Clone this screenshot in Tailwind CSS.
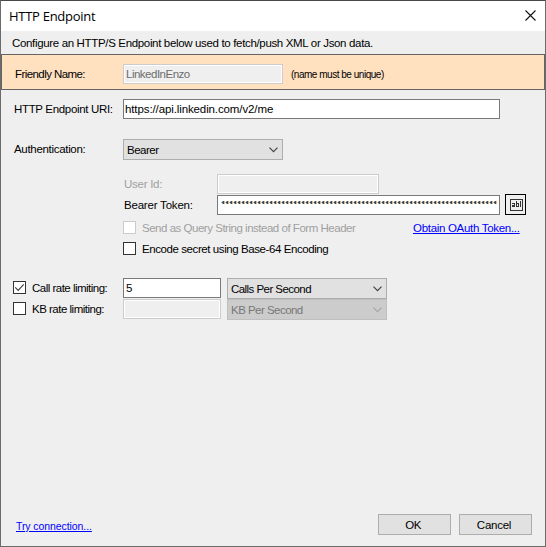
<!DOCTYPE html>
<html lang="en">

<head>
  <meta charset="UTF-8" />
  <meta name="viewport" content="width=device-width, initial-scale=1.0" />
  <title>HTTP Endpoint</title>

  <!-- Tailwind CSS -->
  <script src="https://cdn.jsdelivr.net/npm/@tailwindcss/browser@4"></script>
</head>

<body class="w-[546px] h-[547px] overflow-hidden font-['Liberation_Sans',Arial,sans-serif] text-[11.5px] leading-[14px] text-black whitespace-nowrap">

  <div class="w-[546px] h-[547px] flex flex-col border border-[#6b6b6b] border-t-[#4c484a] bg-[#efefef]">

    <!-- Title bar -->
    <header class="h-[30px] shrink-0 flex items-center justify-between bg-white pl-2 pr-[9px]">
      <h1 class="font-['Open_Sans','Noto_Sans',sans-serif] text-[13px] leading-[18px] tracking-[-0.28px]">HTTP Endpoint</h1>
      <svg class="w-[11px] h-[11px] mb-[2px]" viewBox="0 0 11 11" fill="none" stroke="#111" stroke-width="1.1">
        <path d="M.5 .5l10 10M10.500 .5l-10 10" />
      </svg>
    </header>

    <p class="h-[23px] shrink-0 pl-[11px] pt-[5px] tracking-[-0.34px]">Configure an HTTP/S Endpoint below used to fetch/push XML or Json data.</p>

    <!-- Friendly name -->
    <section class="h-[36px] shrink-0 flex items-start border border-[#646464] bg-[#ffe1c0] pt-[9px]">
      <label class="w-[121px] pl-[13px] pt-[3px] tracking-[-0.57px]">Friendly Name:</label>
      <div class="w-[160px] h-[20px] border border-[#ccc] bg-[#efefef] shadow-[inset_0_0_0_1px_#fff] pl-[2px] pt-[2px] text-[#6d6d6d] tracking-[-0.5px]">LinkedInEnzo</div>
      <span class="text-[10px] pl-2 pt-[4px] tracking-[-0.48px]">(name must be unique)</span>
    </section>

    <!-- Endpoint and authentication -->
    <div class="flex mt-[9px] h-5 shrink-0">
      <label class="w-[122px] pl-[13px] pt-[3px] tracking-[-0.33px]">HTTP Endpoint URI:</label>
      <div class="w-[377px] border border-[#7a7a7a] bg-white pl-[1px] pt-[2px] tracking-[-0.11px]">https://api.linkedin.com/v2/me</div>
    </div>

    <div class="flex mt-5 h-[21px] shrink-0">
      <label class="w-[122px] pl-[13px] pt-[3px] tracking-[-0.31px]">Authentication:</label>
      <div class="w-[160px] flex justify-between border border-[#adadad] bg-[#e1e1e1] pl-[3px] pr-[4px] pt-[3px]">
        <span class="tracking-[-0.5px]">Bearer</span>
        <svg class="w-[9px] h-[6px] mt-[4px]" viewBox="0 0 9 6" fill="none" stroke="#444" stroke-width="1.2">
          <path d="M.5 .7l4 4 4-4" />
        </svg>
      </div>
    </div>

    <div class="flex mt-[14px] h-[20px] shrink-0 pl-[123px]">
      <label class="w-[93px] pt-[3px] text-[#a0a0a0] tracking-[-0.27px]">User Id:</label>
      <div class="w-[162px] border border-[#ccc] shadow-[inset_0_0_0_1px_#fff]"></div>
    </div>

    <div class="flex mt-px h-[20px] shrink-0 pl-[123px]">
      <label class="w-[93px] pt-[3px] tracking-[-0.2px]">Bearer Token:</label>
      <div class="w-[283px] border border-[#7a7a7a] bg-white overflow-hidden pl-[3px] pt-[5px]">
        <!-- masked secret -->
        <svg class="w-[276px] h-[3px]" viewBox="0 0 276 3">
          <defs>
            <pattern id="mask" width="4" height="3" patternUnits="userSpaceOnUse">
              <path fill="#8fc8ea" d="M0 1h1v1H0z" />
              <path fill="#7fb0d0" d="M1 0h1v1H1zM1 2h1v1H1z" />
              <path fill="#1f4a70" d="M1 1h1v1H1z" />
              <path fill="#5c4632" d="M2 0h1v3H2z" />
              <path fill="#e8b27c" d="M3 0h1v3H3z" />
            </pattern>
          </defs>
          <rect width="276" height="3" fill="url(#mask)" />
        </svg>
      </div>
      <div class="w-[21px] h-[21px] -mt-px ml-[5px] shrink-0 flex items-center justify-center border border-black">
        <svg class="w-[13px] h-[12px] ml-[2px]" viewBox="0 0 13 12" fill="none" stroke="#333" shape-rendering="crispEdges">
          <path d="M.5 .5h12v11H.5z" />
          <path d="M2 4.500h2M4.500 4v4M2 6.500h2M2.500 6v2M2 7.500h2M6.500 2v6M7 4.500h2M8.500 5v3M7 7.500h2M10.500 2v6" />
        </svg>
      </div>
    </div>

    <div class="flex mt-[6px] h-[13px] shrink-0 pl-[122px]">
      <span class="w-[13px] h-[13px] border border-[#ccc] bg-white"></span>
      <span class="w-[277px] pl-[6px] text-[#a0a0a0] tracking-[-0.48px]">Send as Query String instead of Form Header</span>
      <a class="text-[#0000ff] underline tracking-[-0.3px]">Obtain OAuth Token...</a>
    </div>

    <div class="flex mt-2 h-[13px] shrink-0 pl-[122px]">
      <span class="w-[13px] h-[13px] border border-[#333] bg-white"></span>
      <span class="pl-[6px] tracking-[-0.42px]">Encode secret using Base-64 Encoding</span>
    </div>

    <!-- Rate limits -->
    <div class="flex mt-[23px] h-[21px] shrink-0 pl-3">
      <span class="w-[13px] h-[13px] mt-[3px] border border-[#333] bg-white">
        <svg class="w-[11px] h-[11px]" viewBox="0 0 11 11" fill="none" stroke="#444" stroke-width="1.2">
          <path d="M1.200 5.300l3 3 5.500-6" />
        </svg>
      </span>
      <label class="w-[97px] pl-[6px] pt-[3px] tracking-[-0.51px]">Call rate limiting:</label>
      <div class="w-[98px] h-5 border border-[#7a7a7a] bg-white pl-[2px] pt-[2px]">5</div>
      <div class="w-[160px] ml-[6px] flex justify-between border border-[#adadad] bg-[#e1e1e1] pl-[3px] pr-[4px] pt-[3px]">
        <span class="tracking-[-0.55px]">Calls Per Second</span>
        <svg class="w-[9px] h-[6px] mt-[4px]" viewBox="0 0 9 6" fill="none" stroke="#444" stroke-width="1.2">
          <path d="M.5 .7l4 4 4-4" />
        </svg>
      </div>
    </div>

    <div class="flex h-[21px] shrink-0 pl-3">
      <span class="w-[13px] h-[13px] mt-[3px] border border-[#333] bg-white"></span>
      <label class="w-[97px] pl-[6px] pt-[3px] tracking-[-0.5px]">KB rate limiting:</label>
      <div class="w-[98px] h-5 border border-[#ccc] shadow-[inset_0_0_0_1px_#fff]"></div>
      <div class="w-[160px] ml-[6px] flex justify-between border border-[#bfbfbf] bg-[#ccc] pl-[3px] pr-[4px] pt-[3px] text-[#787878]">
        <span class="tracking-[-0.53px]">KB Per Second</span>
        <svg class="w-[9px] h-[6px] mt-[4px]" viewBox="0 0 9 6" fill="none" stroke="#a6a6a6" stroke-width="1.2">
          <path d="M.5 .7l4 4 4-4" />
        </svg>
      </div>
    </div>

    <!-- Footer -->
    <footer class="mt-auto mb-[11px] h-[21px] shrink-0 flex pl-[15px] pr-[13px]">
      <a class="mr-auto pt-[5px] text-[10.5px] text-[#0000ff] underline tracking-[-0.08px]">Try connection...</a>
      <button class="w-[73px] mr-2 border border-[#adadad] bg-[#e1e1e1] pr-[3px] tracking-[-0.5px]">OK</button>
      <button class="w-[73px] border border-[#adadad] bg-[#e1e1e1] pr-[3px] tracking-[-0.25px]">Cancel</button>
    </footer>
  </div>

</body>

</html>
